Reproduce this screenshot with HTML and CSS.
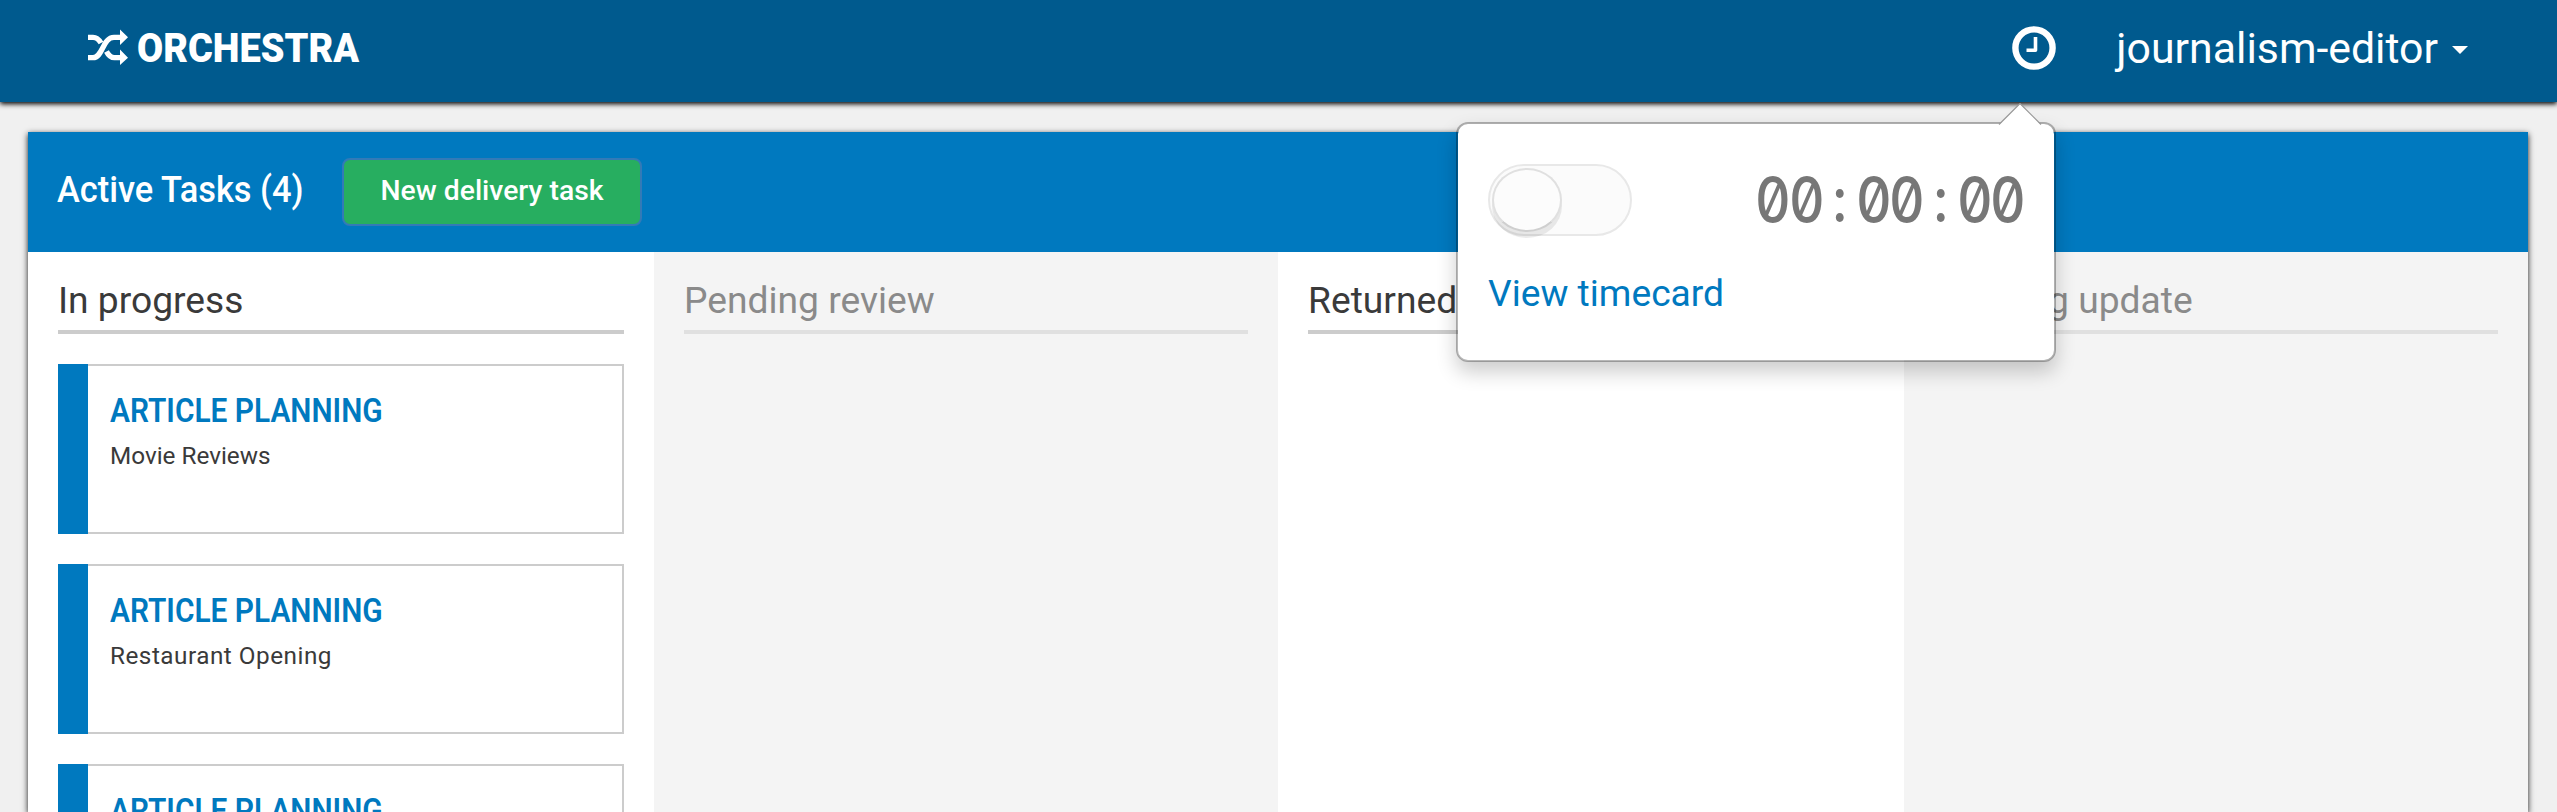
FILE: index.html
```
<!DOCTYPE html>
<html lang="en">
<head>
<meta charset="utf-8">
<title>Orchestra</title>
<link rel="stylesheet" href="styles.css">
</head>
<body>
<header class="navbar">
  <a class="brand">
    <svg class="brand-icon" viewBox="0 0 40 36" width="40" height="36">
      <path d="M0 28.7H5C15 28.7 14.500 8.300 26 8.300H33M0 8.300H5C9 8.300 11 10.500 13 14M18.500 22.500C20.500 26.500 22.500 28.700 26.500 28.700H33" fill="none" stroke="#fff" stroke-width="5.300"/>
      <path d="M32 .5L40 8.300L32 16ZM32 20.500L40 28.700L32 36Z" fill="#fff"/>
    </svg>
    <span class="brand-name">ORCHESTRA</span>
  </a>
  <nav class="nav-right">
    <svg class="clock" viewBox="0 0 44 44" width="44" height="44">
      <circle cx="22" cy="22" r="18.600" fill="none" stroke="#fff" stroke-width="6.400"/>
      <path d="M23.500 11V24.300H14.500" fill="none" stroke="#fff" stroke-width="3.600" stroke-linejoin="round"/>
    </svg>
    <span class="user">journalism-editor</span>
    <span class="caret"></span>
  </nav>
  <section class="popover">
    <svg class="popover-arrow" viewBox="0 0 44 22" width="44" height="22">
      <path d="M1 22L22 1L43 22Z" fill="#fff"/>
      <path d="M1 21.500L22 .5L43 21.500" fill="none" stroke="#999" stroke-width="1.200"/>
    </svg>
    <div class="timer-row">
      <div class="toggle"><div class="knob"></div></div>
      <div class="timer"><span>0</span><span>0</span><span>:</span><span>0</span><span>0</span><span>:</span><span>0</span><span>0</span></div>
    </div>
    <a class="timecard-link">View timecard</a>
  </section>
</header>
<main class="panel">
  <div class="panel-head">
    <h1 class="panel-title">Active Tasks (4)</h1>
    <button class="new-task">New delivery task</button>
  </div>
  <div class="columns">
    <section class="column">
      <h2 class="column-title">In progress</h2>
      <article class="card"><h3 class="card-title">ARTICLE PLANNING</h3><p class="card-text">Movie Reviews</p></article>
      <article class="card"><h3 class="card-title">ARTICLE PLANNING</h3><p class="card-text card-text-wide">Restaurant Opening</p></article>
      <article class="card"><h3 class="card-title">ARTICLE PLANNING</h3></article>
    </section>
    <section class="column column-empty"><h2 class="column-title">Pending review</h2></section>
    <section class="column"><h2 class="column-title">Returned</h2></section>
    <section class="column column-empty"><h2 class="column-title">Pending update</h2></section>
  </div>
</main>
</body>
</html>
```
FILE: styles.css
```
* { box-sizing: border-box; }

body {
  margin: 0;
  height: 812px;
  overflow: hidden;
  background: #f0f0f0;
  font-family: Roboto, "Liberation Sans", sans-serif;
  color: #3a3a3a;
}

h1, h2, h3, p { margin: 0; font-weight: 400; }

/* Top bar */
.navbar {
  position: relative;
  z-index: 2;
  display: flex;
  justify-content: space-between;
  height: 102px;
  padding: 0 89px 0 88px;
  background: #005a8e;
  box-shadow: 0 2px 5px #000;
  color: #fff;
}

.brand { display: flex; align-items: center; gap: 9px; padding-bottom: 9px; }
.brand-icon { flex: none; }
.brand-name {
  font-size: 40.8px;
  font-weight: 900;
  line-height: 50px;
  transform: scaleX(.93);
  transform-origin: left;
  padding-top: 3px;
}

.nav-right { display: flex; align-items: center; padding-bottom: 6px; }
.clock { margin-right: 60px; }
.user { font-size: 42.8px; line-height: 50px; }
.caret {
  margin: 4px 0 0 14px;
  border: 8px solid transparent;
  border-top-color: #fff;
  border-bottom: 0;
}

/* Timer popover */
.popover {
  position: absolute;
  top: 122px;
  left: 1456px;
  width: 600px;
  height: 240px;
  padding: 40px 29px 0 30px;
  border: 2px solid rgba(0, 0, 0, .28);
  border-radius: 12px;
  background: #fff;
  background-clip: padding-box;
  box-shadow: 0 10px 20px rgba(0, 0, 0, .2);
}
.popover-arrow { position: absolute; top: -21px; right: 12px; }

.timer-row { display: flex; justify-content: space-between; align-items: center; height: 72px; }
.toggle {
  width: 144px;
  height: 72px;
  padding: 2px;
  border: 2px solid #e8e8e8;
  border-radius: 36px;
  background: #fbfbfb;
}
.knob {
  width: 70px;
  height: 64px;
  border: 2px solid #e0e0e0;
  border-bottom-color: #cfcfcf;
  border-radius: 35px / 32px;
  background: #fcfcfc;
  box-shadow: 0 6px 0 rgba(0, 0, 0, .08);
}
.timer {
  display: flex;
  font-family: Inter, sans-serif;
  font-size: 62px;
  font-weight: 500;
  font-feature-settings: "zero" 1;
  line-height: 72px;
  color: #777;
}
.timer span {
  display: flex;
  justify-content: center;
  width: 33.65px;
  transform: scaleX(.88);
}
.timecard-link {
  display: block;
  margin-top: 32px;
  font-size: 37.2px;
  line-height: 50px;
  color: #0079bf;
}

/* Task board */
.panel {
  width: 2500px;
  margin: 30px 0 0 28px;
  background: #fff;
  box-shadow: 0 2px 6px rgba(0, 0, 0, .9);
}
.panel-head {
  display: flex;
  align-items: center;
  height: 120px;
  padding-left: 29px;
  background: #0079bf;
  color: #fff;
}
.panel-title {
  width: 285px;
  padding-bottom: 5px;
  font-size: 36.6px;
  font-weight: 500;
  white-space: nowrap;
  transform: scaleX(.94);
  transform-origin: left;
}
.new-task {
  width: 300px;
  height: 68px;
  padding: 0 0 3px;
  border: 2px solid #337ab7;
  border-radius: 8px;
  background: #27ae60;
  color: #fff;
  font: 500 28.3px Roboto, sans-serif;
}

.columns {
  display: grid;
  grid-template-columns: 626px 624px 626px 624px;
  height: 560px;
  overflow: hidden;
}
.column { padding: 18px 30px 0; }
.column-empty { background: #f4f4f4; }
.column-title {
  height: 64px;
  border-bottom: 4px solid #ccc;
  font-size: 37.2px;
  line-height: 60px;
}
.column-empty .column-title { border-color: #e0e0e0; color: #8a8a8a; }

/* Inset shadows keep the stripe square against the thin outline */
.card {
  height: 170px;
  margin-top: 30px;
  padding: 29px 0 0 52px;
  box-shadow: inset 30px 0 #0079bf, inset 0 0 0 2px #ccc;
}
.card-title {
  font-size: 32.4px;
  font-weight: 600;
  line-height: 36px;
  color: #0079bf;
  transform: scaleX(.922);
  transform-origin: left;
}
.card-text { margin-top: 9px; font-size: 24.3px; line-height: 36px; }
.card-text-wide { letter-spacing: .5px; }
```
